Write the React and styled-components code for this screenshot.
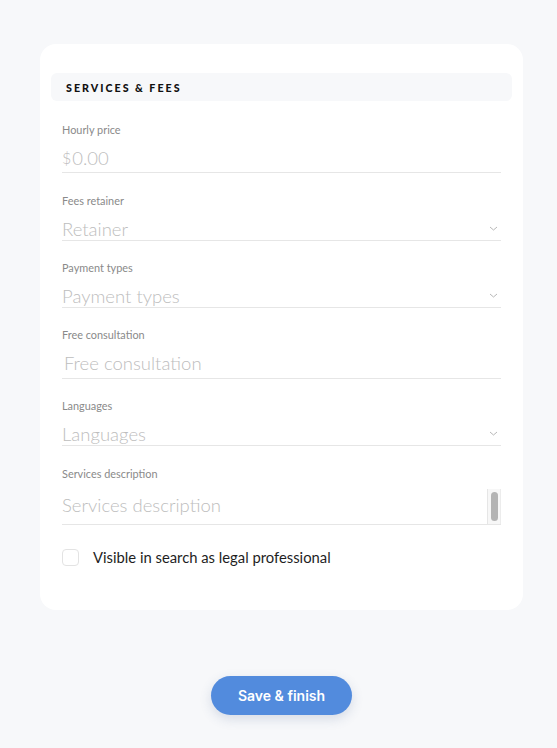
import React from "react";
import styled, { createGlobalStyle } from "styled-components";

const Global = createGlobalStyle`
  html, body { margin: 0; padding: 0; background: #f7f8fa; }
  body { font-family: Lato, "Open Sans", sans-serif; }
  * { box-sizing: border-box; }
`;

const Page = styled.div`
  display: flex;
  flex-direction: column;
  align-items: flex-start;
  padding: 44px 0 34px 40px;
  min-height: 748px;
`;

const Card = styled.section`
  width: 483px;
  background: #ffffff;
  border-radius: 16px;
  padding: 29px 11px 44px 11px;
  display: flex;
  flex-direction: column;
`;

const SectionHeader = styled.div`
  height: 28px;
  background: #f7f8fa;
  border-radius: 6px;
  display: flex;
  align-items: center;
  padding-left: 15px;
  font-family: Lato, sans-serif;
  font-weight: 900;
  font-size: 10.7px;
  letter-spacing: 2px;
  color: #111;
  text-transform: uppercase;
`;

const Fields = styled.div`
  display: flex;
  flex-direction: column;
  gap: 20px;
  padding: 22px 11px 0 11px;
`;

const Field = styled.div`
  display: flex;
  flex-direction: column;
  margin-bottom: ${(p) => p.$mb ?? 0}px;
`;

const Label = styled.div`
  height: 14px;
  line-height: 14px;
  font-size: 10.9px;
  color: #8a8a8a;
`;

const InputRow = styled.div`
  position: relative;
  height: ${(p) => p.$h}px;
  border-bottom: 1px solid #e6e6e6;
  display: flex;
  align-items: flex-end;
  padding-bottom: ${(p) => p.$pb ?? 0}px;
  padding-left: ${(p) => p.$pl ?? 0}px;
  font-size: 18.5px;
  font-weight: 300;
  color: #bdbdbd;
  line-height: 22px;
`;

const Currency = styled.span`
  font-size: 16px;
  margin-right: 1px;
`;

const Chevron = styled.svg`
  position: absolute;
  right: 3px;
  bottom: 9px;
`;

const ScrollTrack = styled.div`
  position: absolute;
  right: 0;
  top: 8px;
  bottom: 0;
  width: 14px;
  background: #f7f7f7;
  border-left: 1px solid #e6e6e6;
  border-right: 1px solid #ececec;
  display: flex;
  justify-content: center;
  padding-top: 3px;
`;

const ScrollThumb = styled.div`
  width: 7px;
  height: 29px;
  border-radius: 4px;
  background: #b4b4b4;
`;

const CheckArea = styled.div`
  padding: 0 11px;
  margin-top: 23px;
`;

const CheckRow = styled.label`
  display: flex;
  align-items: center;
  gap: 14px;
  font-size: 14.8px;
  color: #1e1e1e;
  line-height: 18px;
`;

const Box = styled.span`
  width: 17px;
  height: 17px;
  border: 1px solid #e3e3e3;
  border-radius: 4px;
  background: #fff;
`;

const Footer = styled.div`
  width: 483px;
  display: flex;
  justify-content: center;
  margin-top: 66px;
`;

const Button = styled.button`
  width: 141px;
  height: 39px;
  border: none;
  border-radius: 20px;
  background: #528bdd;
  color: #fff;
  font-family: Inter, sans-serif;
  font-weight: 600;
  font-size: 14px;
  box-shadow: 0 4px 12px rgba(60, 90, 140, 0.18);
`;

const Down = () => (
  <Chevron width="9" height="5" viewBox="0 0 9 5">
    <path d="M1 1 L4.5 4 L8 1" fill="none" stroke="#b8b8b8" strokeWidth="1" />
  </Chevron>
);

export default function App() {
  return (
    <>
      <Global />
      <Page>
        <Card>
          <SectionHeader>Services &amp; Fees</SectionHeader>
          <Fields>
            <Field $mb={1}>
              <Label>Hourly price</Label>
              <InputRow $h={36} $pb={3}>
                <Currency>$</Currency>0.00
              </InputRow>
            </Field>
            <Field>
              <Label>Fees retainer</Label>
              <InputRow $h={33}>
                Retainer
                <Down />
              </InputRow>
            </Field>
            <Field>
              <Label>Payment types</Label>
              <InputRow $h={33}>
                Payment types
                <Down />
              </InputRow>
            </Field>
            <Field>
              <Label>Free consultation</Label>
              <InputRow $h={37} $pb={4} $pl={2}>
                Free consultation
              </InputRow>
            </Field>
            <Field $mb={1}>
              <Label>Languages</Label>
              <InputRow $h={33}>
                Languages
                <Down />
              </InputRow>
            </Field>
            <Field>
              <Label>Services description</Label>
              <InputRow $h={44} $pb={8}>
                Services description
                <ScrollTrack>
                  <ScrollThumb />
                </ScrollTrack>
              </InputRow>
            </Field>
          </Fields>
          <CheckArea>
            <CheckRow>
              <Box />
              Visible in search as legal professional
            </CheckRow>
          </CheckArea>
        </Card>
        <Footer>
          <Button>Save &amp; finish</Button>
        </Footer>
      </Page>
    </>
  );
}
